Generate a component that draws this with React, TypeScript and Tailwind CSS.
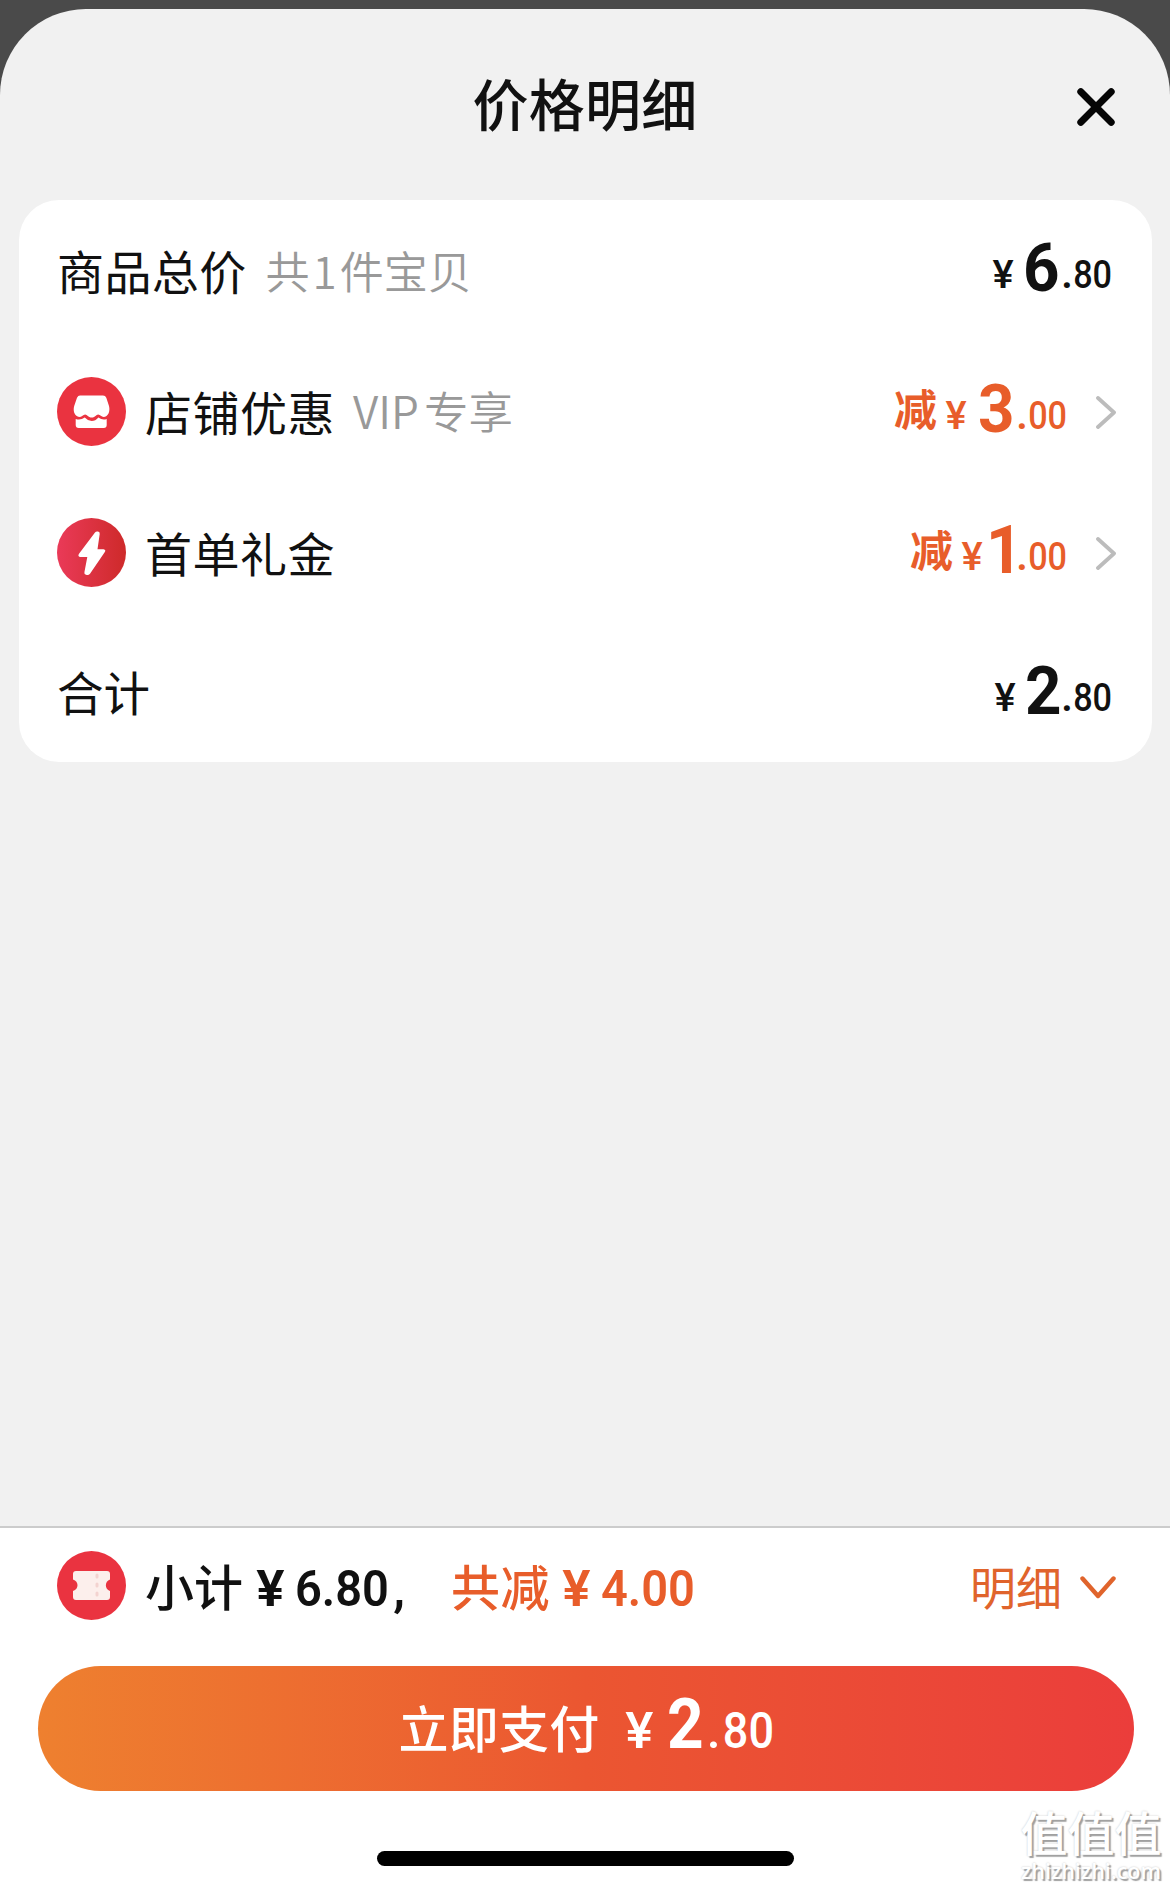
import type { ReactNode } from "react";

const CJK = "font-['Noto_Sans_CJK_SC',sans-serif]";
const NUM = "font-['Roboto','Noto_Sans_CJK_SC',sans-serif]";

function Slot({ className, children }: { className: string; children: ReactNode }) {
  return <span className={`flex shrink-0 justify-center whitespace-nowrap ${className}`}>{children}</span>;
}

function Price({ whole, cents, bigClass, yenClass, prefix }: { whole: string; cents: string; bigClass: string; yenClass: string; prefix?: boolean }) {
  return (
    <div className={`${NUM} mb-[10px] flex items-baseline text-[38px] leading-none font-medium`}>
      {prefix && <Slot className={`${CJK} mr-[8px] w-[43px] -translate-y-[3px] text-[43px] leading-none font-bold`}>减</Slot>}
      <Slot className={`w-[23px] ${yenClass}`}>
        <span className="scale-x-105">¥</span>
      </Slot>
      <Slot className={`translate-y-[3px] text-[67px] leading-none font-bold ${bigClass}`}>
        <span className="scale-x-95">{whole}</span>
      </Slot>
      <Slot className="w-[12px] font-bold">.</Slot>
      <Slot className="w-[40px]">
        <span className="scale-x-90">{cents}</span>
      </Slot>
    </div>
  );
}

function ShopIcon() {
  return (
    <svg width="69" height="69" viewBox="0 0 69 69" className="shrink-0">
      <circle cx="34.500" cy="34.500" r="34.500" fill="#ea3340" />
      <path
        d="M23 18.500H46q2.400 0 3.300 2.200l2.700 8.300c1.400 5-.8 11-5.500 11-2 0-3.300-2.500-5.300-2.500-2.200 0-2.800 3.100-6.400 3.100-3.800 0-4.500-3.100-6.700-3.100-2 0-3.200 2.500-5.100 2.500-5 0-7.400-5.500-5.800-11l2.800-8.300q1-2.200 3-2.200Z"
        fill="#fff"
      />
      <path d="M18.700 42q5 1.500 9-1.500 3.300 3.500 7 3.500t6.700-3.500q4 3 8.300 1.500V48q0 3-3 3h-25q-3 0-3-3Z" fill="#fff" />
    </svg>
  );
}

function BoltIcon() {
  return (
    <svg width="69" height="69" viewBox="0 0 69 69" className="shrink-0">
      <defs>
        <linearGradient id="bolt" x1="0" y1="0" x2="1" y2="0">
          <stop offset="0" stopColor="#ea3a58" />
          <stop offset="1" stopColor="#ce2a2a" />
        </linearGradient>
      </defs>
      <circle cx="34.500" cy="34.500" r="34.500" fill="url(#bolt)" />
      <path
        d="M38 14.500q1-1.300 3-.9t1.700 2.300L40.500 31.200h6q3 .6 1 3.300L33 55.800q-1.500 1.800-4 1-2-.6-1.600-2.600L30.300 39H23q-2.600-.6-1-3.200Z"
        fill="#fff"
      />
    </svg>
  );
}

function TicketIcon() {
  return (
    <svg width="69" height="69" viewBox="0 0 69 69" className="mb-[2px] shrink-0">
      <circle cx="34.500" cy="34.500" r="34.500" fill="#ea3340" />
      <path
        d="M19 20H50q3 0 3 3v5.500c-5.500 2-5.500 9.500 0 11.500V46q0 3-3 3H19q-3 0-3-3V40c6-2 6-9.500 0-11.500V23q0-3 3-3Z"
        fill="#fcefec"
      />
      <path d="M40 24v2M40 33v2M40 42v2" stroke="#f3d3d0" strokeWidth="3" strokeLinecap="round" />
    </svg>
  );
}

function RightArrow() {
  return (
    <svg width="20" height="33" viewBox="0 0 20 33" className="mt-[2px] mr-[36px] ml-[28px] shrink-0" fill="none" stroke="#bcbcbc" strokeWidth="3.800" strokeLinecap="round" strokeLinejoin="round">
      <path d="M2 2 18 16.500 2 31" />
    </svg>
  );
}

export default function App() {
  return (
    <div className="h-[1890px] w-[1170px] overflow-hidden bg-[#4a4a4a] pt-[9px]">
      <div className={`${CJK} relative flex h-[1881px] flex-col rounded-t-[86px] bg-[#f1f1f1] text-[#111]`}>
        <header className="grid h-[191px] grid-cols-[1fr_auto_1fr] items-center">
          <span />
          <h1 className="mb-[5px] text-[56px] leading-none font-medium tracking-[0.3px]">价格明细</h1>
          <svg width="38" height="38" viewBox="0 0 38 38" className="mt-[5px] mr-[55px] ml-auto" fill="none" stroke="#050505" strokeWidth="7" strokeLinecap="round">
            <path d="M3.800 3.800 34.200 34.200M34.200 3.800 3.800 34.200" />
          </svg>
        </header>

        <main className="mr-[18px] ml-[19px] h-[562px] rounded-[40px] bg-white">
          <section className="flex h-[141px] items-center pl-[38px]">
            <span className="mb-[3px] text-[47px] leading-none tracking-[0.4px]">商品总价</span>
            <span className="mb-[2px] ml-[19px] text-[44px] leading-none font-[350] text-[#999]">
              共<span className="mx-[3px]">1</span>件宝贝
            </span>
            <div className="mr-[39px] ml-auto">
              <Price whole="6" cents="80" bigClass="w-[40px]" yenClass="mr-[6px]" />
            </div>
          </section>
          <section className="flex h-[141px] items-center pl-[38px]">
            <ShopIcon />
            <span className="mb-[2px] ml-[19px] text-[47px] leading-none tracking-[0.5px]">店铺优惠</span>
            <span className="mb-[3px] ml-[18px] text-[44.500px] leading-none font-[350] text-[#999]">
              VIP<span className="ml-[5px]">专享</span>
            </span>
            <div className="ml-auto flex items-center text-[#e85d2a]">
              <Price prefix whole="3" cents="00" bigClass="w-[40px]" yenClass="mr-[8px]" />
              <RightArrow />
            </div>
          </section>
          <section className="flex h-[141px] items-center pl-[38px]">
            <BoltIcon />
            <span className="mb-[2px] ml-[19px] text-[47px] leading-none tracking-[0.5px]">首单礼金</span>
            <div className="ml-auto flex items-center text-[#e85d2a]">
              <Price prefix whole="1" cents="00" bigClass="w-[22px] pr-[1px]" yenClass="mr-[10px]" />
              <RightArrow />
            </div>
          </section>
          <section className="flex h-[141px] items-center pl-[38px]">
            <span className="mb-[4px] text-[46.500px] leading-none">合计</span>
            <div className="mr-[39px] ml-auto">
              <Price whole="2" cents="80" bigClass="w-[36px]" yenClass="mr-[8px]" />
            </div>
          </section>
        </main>

        <footer className="mt-auto flex h-[364px] flex-col border-t-2 border-[#ccc] bg-white">
          <div className="flex h-[117px] items-center pl-[57px]">
            <TicketIcon />
            <div className="ml-[19px] flex items-baseline text-[49px] leading-none font-medium">
              <span className="mb-[4px]">小计</span>
              <span className={`${NUM} flex items-baseline text-[50px] leading-none font-semibold`}>
                <Slot className="ml-[11px] w-[32px]"><span className="scale-x-[1.06]">¥</span></Slot>
                <Slot className="ml-[6px] w-[100px]"><span className="scale-x-[.94]">6.80</span></Slot>
                <Slot className="w-[14px]"><span>,</span></Slot>
              </span>
              <span className="ml-[45px] tracking-[0.5px] text-[#e85d2a]">共减</span>
              <span className={`${NUM} flex items-baseline text-[50px] leading-none font-semibold text-[#e85d2a]`}>
                <Slot className="ml-[10px] w-[32px]"><span className="scale-x-[1.06]">¥</span></Slot>
                <Slot className="ml-[6px] w-[100px]"><span className="scale-x-[.94]">4.00</span></Slot>
              </span>
            </div>
            <span className="mb-[4px] ml-auto text-[46px] leading-none text-[#e0642c]">明细</span>
            <svg width="36" height="24" viewBox="0 0 36 24" className="mt-[2px] mr-[54px] ml-[18px]" fill="none" stroke="#e0642c" strokeWidth="4.400" strokeLinecap="round" strokeLinejoin="round">
              <path d="M2.500 2.500 18 20 33.500 2.500" />
            </svg>
          </div>
          <button className="mt-[21px] mr-[36px] ml-[38px] flex h-[125px] items-center justify-center rounded-full bg-linear-to-r from-[#ee802f] via-[#eb5631] to-[#eb3d3b] text-white">
            <span className="mb-[10px] ml-[2px] flex items-baseline">
              <span className="text-[50px] leading-none font-medium tracking-[0.3px]">立即支付</span>
              <span className={`${NUM} flex items-baseline text-[50px] leading-none font-medium`}>
                <Slot className="ml-[24px] w-[32px]"><span className="scale-x-[1.06]">¥</span></Slot>
                <Slot className="ml-[10px] w-[40px] text-[71px] leading-none font-bold"><span className="scale-x-90">2</span></Slot>
                <Slot className="w-[16px]"><span>.</span></Slot>
                <Slot className="w-[54px]"><span className="scale-x-90">80</span></Slot>
              </span>
            </span>
          </button>
          <div className="mt-[60px] ml-[377px] h-[15px] w-[417px] rounded-full bg-black" />
        </footer>

        <div className="absolute right-[8px] bottom-[8px] flex w-[142px] flex-col items-center text-white [text-shadow:2px_2px_1px_#a0a0a0,0_0_2px_#c4c4c4]">
          <span className="mb-[4px] text-[47px] leading-[50px] font-medium">值值值</span>
          <span className="font-['Open_Sans',sans-serif] text-[21.500px] leading-[22px] font-semibold">zhizhizhi.com</span>
        </div>
      </div>
    </div>
  );
}
